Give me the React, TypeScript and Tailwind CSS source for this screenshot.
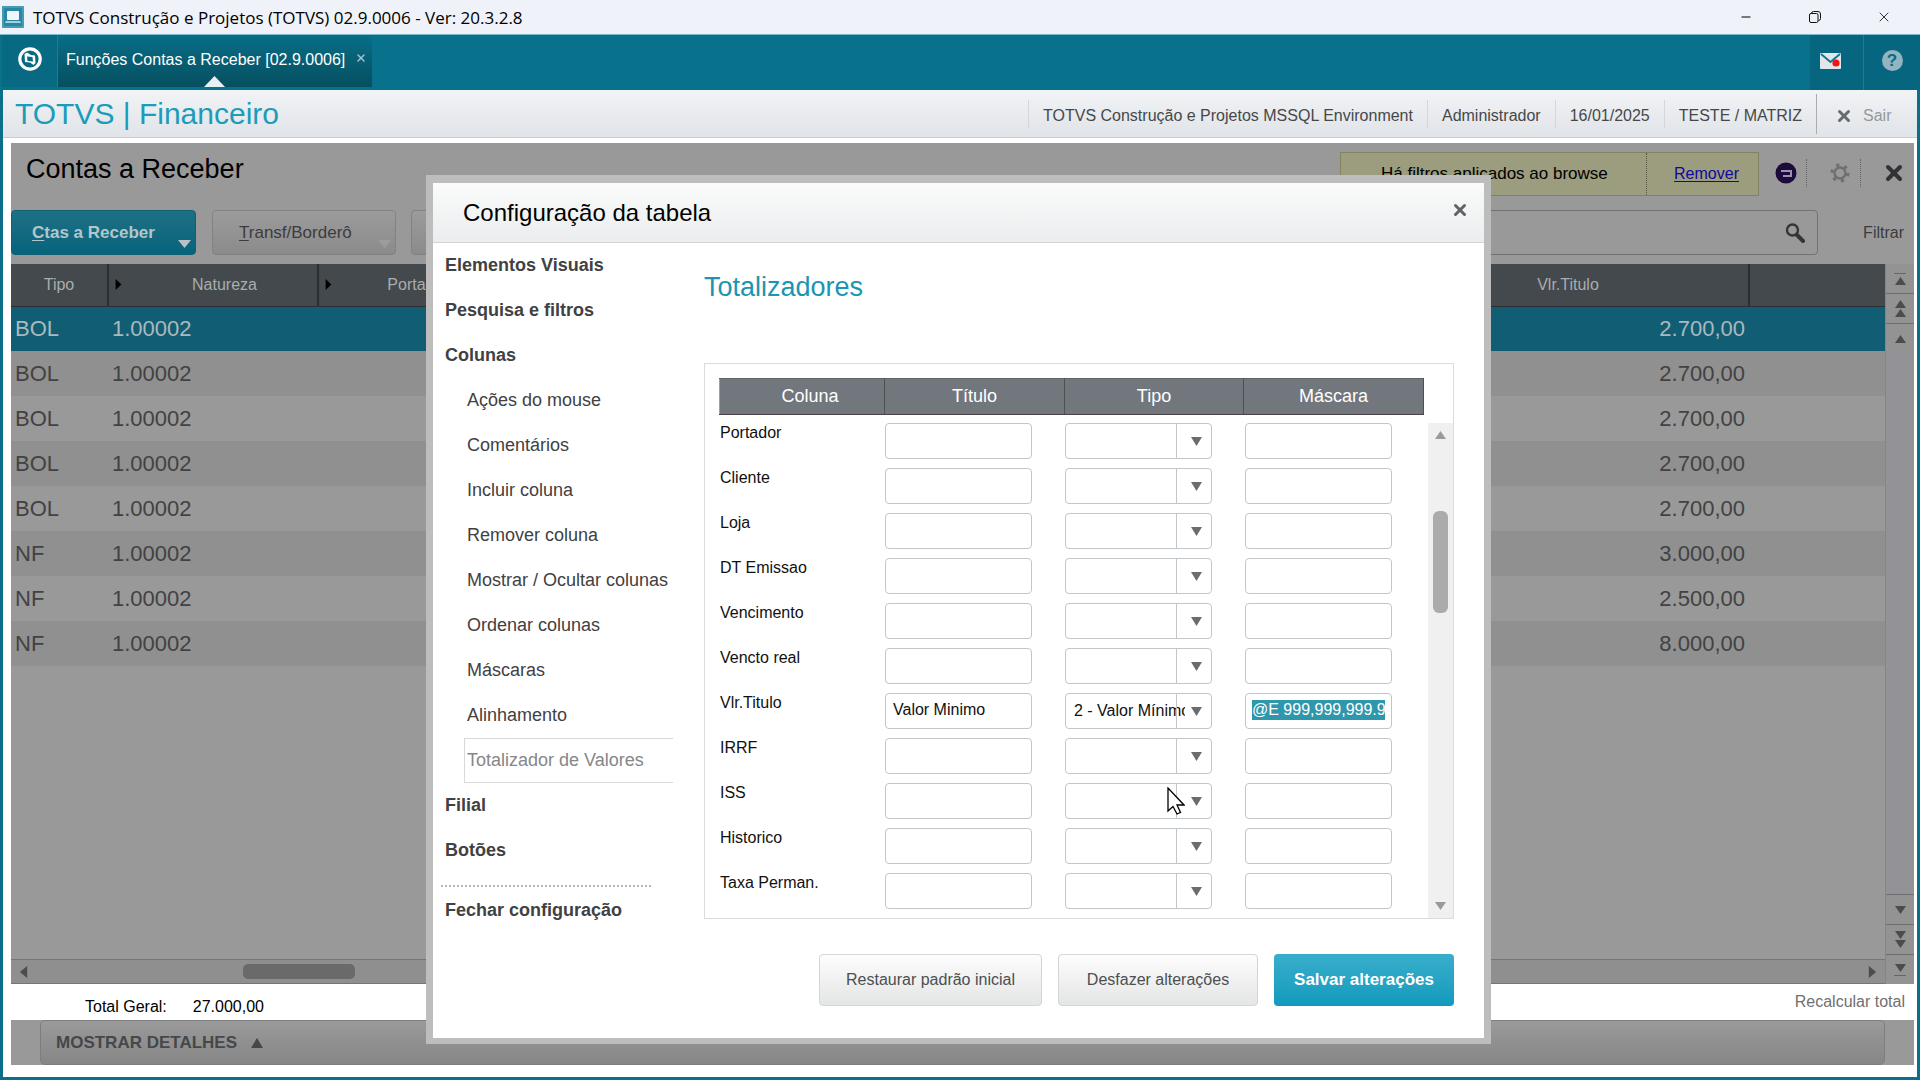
import { Minus, X } from "lucide-react"

const menu = [
  { label: "Elementos Visuais" },
  { label: "Pesquisa e filtros" },
  {
    label: "Colunas",
    items: [
      "Ações do mouse",
      "Comentários",
      "Incluir coluna",
      "Remover coluna",
      "Mostrar / Ocultar colunas",
      "Ordenar colunas",
      "Máscaras",
      "Alinhamento",
      "Totalizador de Valores",
    ],
  },
  { label: "Filial" },
  { label: "Botões" },
]

const totals = [
  { coluna: "Portador" },
  { coluna: "Cliente" },
  { coluna: "Loja" },
  { coluna: "DT Emissao" },
  { coluna: "Vencimento" },
  { coluna: "Vencto real" },
  { coluna: "Vlr.Titulo", titulo: "Valor Minimo", tipo: "2 - Valor Mínimo", mascara: "@E 999,999,999.99" },
  { coluna: "IRRF" },
  { coluna: "ISS" },
  { coluna: "Historico" },
  { coluna: "Taxa Perman." },
]

const records = [
  { tipo: "BOL", natureza: "1.00002", valor: "2.700,00" },
  { tipo: "BOL", natureza: "1.00002", valor: "2.700,00" },
  { tipo: "BOL", natureza: "1.00002", valor: "2.700,00" },
  { tipo: "BOL", natureza: "1.00002", valor: "2.700,00" },
  { tipo: "BOL", natureza: "1.00002", valor: "2.700,00" },
  { tipo: "NF", natureza: "1.00002", valor: "3.000,00" },
  { tipo: "NF", natureza: "1.00002", valor: "2.500,00" },
  { tipo: "NF", natureza: "1.00002", valor: "8.000,00" },
]

const arrows = {
  up: "M0 10 L6 0 L12 10 Z",
  down: "M0 0 L12 0 L6 10 Z",
  left: "M10 0 L10 12 L1 6 Z",
  right: "M1 0 L1 12 L10 6 Z",
}

function Arrow({ dir, className }: { dir: keyof typeof arrows; className: string }) {
  return (
    <svg viewBox={dir === "left" || dir === "right" ? "0 0 11 12" : "0 0 12 10"} preserveAspectRatio="none" className={className} fill="currentColor" aria-hidden="true">
      <path d={arrows[dir]} />
    </svg>
  )
}

function TitleBar() {
  return (
    <header className="flex h-[35px] items-center border-b border-[#7fb9c9] bg-[#eff2f8]">
      <svg viewBox="0 0 22 22" className="ml-[2px] h-[22px] w-[22px]" aria-hidden="true">
        <rect width="22" height="22" rx="1" fill="#2a86a3" />
        <rect x="1" y="1" width="20" height="20" fill="none" stroke="#5fb0c6" />
        <rect x="5" y="5" width="12" height="9" rx="1" fill="#eef8fb" />
        <path d="M4 15h14l1 2H3z" fill="#9fd3e0" />
      </svg>
      <h1 className="ml-[9px] pt-[2px] font-['Open_Sans',sans-serif] text-[17px] text-black">
        TOTVS Construção e Projetos (TOTVS) 02.9.0006 - Ver: 20.3.2.8
      </h1>
      <div className="ml-auto flex h-full items-center pr-[2px]">
        <button aria-label="Minimizar" className="flex h-full w-[69px] items-center justify-center">
          <Minus className="h-3.5 w-3.5 text-black" strokeWidth={2} />
        </button>
        <button aria-label="Restaurar" className="flex h-full w-[69px] items-center justify-center">
          <svg viewBox="0 0 12 12" className="h-3 w-3" fill="none" stroke="#111" aria-hidden="true">
            <rect x="0.5" y="2.5" width="8.5" height="9" rx="1.5" />
            <path d="M2.5 2.5 Q2.5 0.5 4.5 0.5 H9 Q11.5 0.5 11.5 3 V7.5 Q11.5 9.5 9.5 9.5" />
          </svg>
        </button>
        <button aria-label="Fechar janela" className="flex h-full w-[69px] items-center justify-center">
          <X className="h-4 w-4 text-[#333]" strokeWidth={1.5} />
        </button>
      </div>
    </header>
  )
}

function TabBar() {
  return (
    <nav className="flex h-[55px] bg-[#08718c]">
      <button aria-label="Início" className="ml-[2px] flex h-[52px] w-[56px] items-center justify-center border-r border-[#3a6f85] bg-[#086a82] pb-1">
        <svg viewBox="0 0 24 24" className="h-6 w-6" aria-hidden="true">
          <circle cx="12" cy="12" r="10.2" fill="none" stroke="#fff" strokeWidth="3.2" />
          <path d="M6.5 7 L9 5.5 L13 8 L17 8.5 L17.5 16 L15.5 18 L12 15.5 L7 15 Z" fill="#fff" />
          <path d="M9 9.5 L14.5 10 L15 14.5 L9.5 14 Z" fill="#086a82" />
        </svg>
      </button>
      <div className="relative flex h-[52px] w-[314px] items-center bg-gradient-to-b from-[#086e87] to-[#064f60] pb-[2px] pl-2 text-[16px] text-white">
        <a href="#funcoes">Funções Contas a Receber [02.9.0006]</a>
        <button aria-label="Fechar aba" className="ml-2.5 pb-1 text-[#9fc3ce]">
          <X className="h-3 w-3" strokeWidth={3} />
        </button>
        <Arrow dir="up" className="absolute bottom-0 left-[146px] h-[11px] w-[21px] text-[#e8f1f4]" />
      </div>
      <div className="ml-auto flex h-[55px] bg-[#07667f]">
        <button aria-label="Mensagens" className="flex w-[54px] items-center justify-center border-r border-[#3a6f85] pb-1 pr-3">
          <svg viewBox="0 0 21 16" className="h-4 w-[21px]" aria-hidden="true">
            <rect width="21" height="16" rx="1" fill="#dfe7ea" />
            <path d="M1 1 L10.5 9 L20 1" fill="none" stroke="#1b7389" strokeWidth="2" />
            <circle cx="16" cy="10" r="3.6" fill="#f21313" />
          </svg>
        </button>
        <button aria-label="Ajuda" className="flex w-[56px] items-center justify-center pb-1">
          <span className="flex h-[21px] w-[21px] items-center justify-center rounded-full bg-[#93b4c1] text-[17px] font-bold leading-none text-[#086a82]">?</span>
        </button>
      </div>
    </nav>
  )
}

function Toolbar() {
  return (
    <div className="flex h-[48px] items-center border-b border-[#c9cdcf] bg-gradient-to-b from-[#f1f3f5] to-[#e1e4e8] text-[16px] text-[#45484b]">
      <h2 className="ml-3 text-[30px] text-[#1a9cba]">TOTVS | Financeiro</h2>
      <div className="ml-auto flex h-7 items-center divide-x divide-[#d3d7da] border-l border-[#d3d7da] whitespace-nowrap">
        <span className="px-[14px] pt-1">TOTVS Construção e Projetos MSSQL Environment</span>
        <span className="px-[14px] pt-1">Administrador</span>
        <span className="px-[14px] pt-1">16/01/2025</span>
        <span className="px-[14px] pt-1">TESTE / MATRIZ</span>
      </div>
      <button className="flex h-10 w-[101px] items-center gap-[10px] border-l border-[#a9adb0] pl-[18px] pt-1 text-[#94989b]">
        <X className="h-[18px] w-[18px] text-[#686c70]" strokeWidth={4} />
        Sair
      </button>
    </div>
  )
}

function BrowseHeader() {
  return (
    <>
      <div className="flex h-[67px] items-start">
        <h2 className="ml-[15px] mt-2 text-[27px] leading-[36px] text-black">Contas a Receber</h2>
        <div className="ml-auto mt-[9px] flex h-[44px] items-center border border-[#83835f] bg-[#9c9c7e] text-[16px] text-black">
          <span className="w-[305px] pl-10 text-[17px]">Há filtros aplicados ao browse</span>
          <span className="flex h-full w-[112px] items-center justify-center border-l border-dotted border-[#55553f] pl-2">
            <a href="#remover" className="text-[#1008a0] underline underline-offset-2">Remover</a>
          </span>
        </div>
        <div className="mt-4 flex h-7 items-center">
          <button aria-label="Assistente" className="flex h-full w-[48px] items-center border-r border-dotted border-[#666] pl-4">
            <svg viewBox="0 0 22 22" className="h-[22px] w-[22px]" aria-hidden="true">
              <circle cx="11" cy="11" r="10.5" fill="#1c0c3c" />
              <path d="M6 9h10v5H8" stroke="#a08fae" strokeWidth="2" fill="none" />
            </svg>
          </button>
          <button aria-label="Configurações" className="flex h-full w-[54px] items-center justify-center border-r border-dotted border-[#666] pl-3 text-[#6f6f6f]">
            <svg viewBox="0 0 20 20" className="h-5 w-5" fill="none" stroke="currentColor" aria-hidden="true">
              <circle cx="10" cy="10" r="5.5" strokeWidth="2.4" />
              <circle cx="10" cy="10" r="8" strokeWidth="3" strokeDasharray="3.2 5.18" />
            </svg>
          </button>
          <button aria-label="Fechar" className="flex h-full w-[53px] items-center justify-center pl-3 text-[#303235]">
            <X className="h-6 w-6" strokeWidth={4} />
          </button>
        </div>
      </div>
      <div className="flex h-[45px] items-center text-[17px]">
        <button className="relative flex h-full w-[185px] items-center rounded-[4px] border border-[#0d6172] bg-gradient-to-b from-[#1e7084] to-[#04647c] pl-5 font-bold text-[#b5c6ca]">
          <span><span className="underline underline-offset-2">C</span>tas a Receber</span>
          <Arrow dir="down" className="absolute bottom-[6px] right-1 h-[8px] w-[13px] text-[#b9c3c5]" />
        </button>
        <button className="relative ml-4 flex h-full w-[184px] items-center rounded-[4px] border border-[#828282] bg-gradient-to-b from-[#9b9b9b] to-[#8b8b8b] pl-[26px] text-[17px] text-[#3c3c3c]">
          <span><span className="underline underline-offset-2">T</span>ransf/Borderô</span>
          <Arrow dir="down" className="absolute bottom-[6px] right-1 h-[8px] w-[13px] text-[#9c9c9c]" />
        </button>
        <button aria-label="Mais ações" className="ml-[15px] h-full w-[184px] rounded-[4px] border border-[#828282] bg-gradient-to-b from-[#9b9b9b] to-[#8b8b8b]" />
        <div className="ml-4 flex h-full flex-1 items-center rounded-[4px] border border-[#727272]">
          <input aria-label="Pesquisar" className="h-full min-w-0 flex-1 bg-transparent px-3 outline-none" />
          <button aria-label="Buscar" className="mr-3 text-[#333537]">
            <svg viewBox="0 0 20 20" className="h-5 w-5" fill="none" stroke="currentColor" aria-hidden="true">
              <circle cx="7.5" cy="7" r="5.5" strokeWidth="2.4" />
              <path d="M12 12 L18 18" strokeWidth="4" strokeLinecap="round" />
            </svg>
          </button>
        </div>
        <button className="w-[96px] pr-[10px] text-right text-[16px] text-[#3c3c3c]">Filtrar</button>
      </div>
    </>
  )
}

function BrowseTable() {
  return (
    <table className="w-full table-fixed border-collapse">
      <colgroup>
        <col className="w-[97px]" />
        <col className="w-[210px]" />
        <col className="w-[177px]" />
        <col />
        <col className="w-[362px]" />
        <col className="w-[136px]" />
      </colgroup>
      <thead>
        <tr className="h-[42px] bg-[#43494c] text-[16px] text-[#a9adae]">
          <th className="border-r-2 border-b border-[#2b2f31] font-normal">Tipo</th>
          {["Natureza", "Portador"].map((name) => (
            <th key={name} className="border-r-2 border-b border-[#2b2f31] font-normal">
              <span className="flex items-center pl-1.5">
                <Arrow dir="right" className="h-[11px] w-[7px] text-black" />
                <span className="flex-1 pl-2.5">{name}</span>
              </span>
            </th>
          ))}
          <th className="border-r-2 border-b border-[#2b2f31]" />
          <th className="border-r-2 border-b border-[#2b2f31] font-normal">Vlr.Titulo</th>
          <th className="border-b border-[#2b2f31]" />
        </tr>
      </thead>
      <tbody>
        {records.map((record, index) => (
          <tr
            key={index}
            className={`h-[45px] text-[22px] leading-[30px] ${
              index === 0 ? "bg-[#115e74] text-[#a9b9bd]" : index % 2 ? "bg-[#909090] text-[#424242]" : "bg-[#999999] text-[#424242]"
            }`}
          >
            <td className="pl-1">{record.tipo}</td>
            <td className="pl-1">{record.natureza}</td>
            <td />
            <td />
            <td className="pr-1 text-right">{record.valor}</td>
            <td />
          </tr>
        ))}
      </tbody>
    </table>
  )
}

const railButton = "flex h-[30px] w-full flex-col items-center justify-center border-b border-[#6d6d6d] bg-[#939393] text-[#4a4c4e]"

function ScrollRail() {
  return (
    <div className="flex w-[29px] flex-col justify-between border-l border-[#858585] bg-[#939397]">
      <div>
        <button aria-label="Primeiro registro" className={railButton}>
          <span className="mb-[3px] h-px w-3 bg-[#666]" />
          <Arrow dir="up" className="h-2 w-[11px]" />
        </button>
        <button aria-label="Página anterior" className={railButton}>
          <Arrow dir="up" className="h-2 w-[11px]" />
          <Arrow dir="up" className="mt-px h-2 w-[11px]" />
        </button>
        <button aria-label="Registro anterior" className="flex h-[30px] w-full items-center justify-center bg-[#939393] text-[#4a4c4e]">
          <Arrow dir="up" className="h-2 w-[11px]" />
        </button>
      </div>
      <div className="border-t border-[#6d6d6d]">
        <button aria-label="Próximo registro" className={railButton}>
          <Arrow dir="down" className="h-2 w-[11px]" />
        </button>
        <button aria-label="Próxima página" className={railButton}>
          <Arrow dir="down" className="h-2 w-[11px]" />
          <Arrow dir="down" className="mt-px h-2 w-[11px]" />
        </button>
        <button aria-label="Último registro" className="flex h-[29px] w-full flex-col items-center justify-center bg-[#939393] text-[#4a4c4e]">
          <Arrow dir="down" className="h-2 w-[11px]" />
          <span className="mt-[3px] h-px w-3 bg-[#666]" />
        </button>
      </div>
    </div>
  )
}

function Browse() {
  return (
    <main className="mt-[5px] flex flex-1 flex-col pb-3 pl-2 pr-[3px]">
      <div className="flex flex-1 flex-col bg-[#999999]">
        <BrowseHeader />
        <div className="mt-[9px] flex flex-1">
          <div className="flex min-w-0 flex-1 flex-col">
            <div className="flex-1">
              <BrowseTable />
            </div>
            <div className="flex h-[25px] items-center border-y border-[#757575] bg-[#8f8f8f] px-2 text-[#4c4c4c]">
              <Arrow dir="left" className="h-3 w-[9px]" />
              <span className="ml-[215px] h-[15px] w-[112px] rounded-[5px] bg-[#6a6a6a]" />
              <Arrow dir="right" className="ml-auto h-3 w-[9px]" />
            </div>
          </div>
          <ScrollRail />
        </div>
      </div>
      <div className="flex h-[36px] items-center justify-between bg-white pl-[74px] pr-[9px] text-[16px]">
        <div className="flex gap-[26px] pt-2.5 text-black">
          <span>Total Geral:</span>
          <span>27.000,00</span>
        </div>
        <button className="text-[#707070]">Recalcular total</button>
      </div>
      <div className="bg-[#999999] pl-[29px] pr-[29px]">
        <button className="flex h-[45px] w-full items-center gap-[14px] rounded-[5px] border border-[#7d7d7d] bg-gradient-to-b from-[#9a9a9a] to-[#868686] pl-[15px] text-[17px] font-bold text-[#45474a]">
          MOSTRAR DETALHES
          <Arrow dir="up" className="h-[10px] w-3" />
        </button>
      </div>
    </main>
  )
}

function ConfigMenu() {
  return (
    <nav className="w-[271px] shrink-0 pl-3 text-[18px] text-[#3f4142]">
      <ul>
        {menu.map((group) => (
          <li key={group.label}>
            <a href="#grupo" className="flex h-[45px] items-center font-bold">{group.label}</a>
            {group.items && (
              <ul className="pl-[19px] pr-[20px]">
                {group.items.map((item) => (
                  <li key={item}>
                    <a
                      href="#item"
                      className={`flex h-[45px] w-[209px] items-center whitespace-nowrap border-y border-l pl-[2px] ${
                        item === "Totalizador de Valores" ? "border-[#d9d9d9] text-[#85878a]" : "border-transparent"
                      }`}
                    >
                      {item}
                    </a>
                  </li>
                ))}
              </ul>
            )}
          </li>
        ))}
      </ul>
      <hr className="-ml-1 mt-[12px] w-[210px] border-t-2 border-dotted border-[#b5b5b5]" />
      <a href="#fechar" className="flex h-[47px] items-center font-bold">Fechar configuração</a>
    </nav>
  )
}

const field = "block h-9 w-[147px] rounded-[4px] border border-[#c3c6c8] text-[16px] outline-none"

function TotalsPanel() {
  return (
    <section className="border border-[#dcdcdc] pl-[14px] pt-[14px]">
      <table className="table-fixed border-collapse">
        <colgroup>
          <col className="w-[165px]" />
          <col className="w-[180px]" />
          <col className="w-[179px]" />
          <col className="w-[180px]" />
        </colgroup>
        <thead>
          <tr className="h-[36px] bg-[#72777d] text-[18px] text-white">
            {["Coluna", "Título", "Tipo", "Máscara"].map((name) => (
              <th key={name} className="border-x border-y border-l-[#9ea2a6] border-r-[#4d5054] border-b-[#4a4348] border-t-[#5f6469] font-normal first:pl-4">
                {name}
              </th>
            ))}
          </tr>
        </thead>
      </table>
      <div className="mt-2 flex">
        <table className="table-fixed border-collapse">
          <colgroup>
            <col className="w-[166px]" />
            <col className="w-[180px]" />
            <col className="w-[180px]" />
            <col className="w-[180px]" />
          </colgroup>
          <tbody>
            {totals.map((row) => (
              <tr key={row.coluna} className="h-[45px] align-top">
                <th scope="row" className="pl-px text-left text-[16px] font-normal leading-5 text-[#111]">{row.coluna}</th>
                <td>
                  <input aria-label={`Título ${row.coluna}`} defaultValue={row.titulo} className={`${field} bg-white px-[7px] pb-[2px] text-[#111]`} />
                </td>
                <td>
                  <div className="relative w-[147px]">
                    <select aria-label={`Tipo ${row.coluna}`} defaultValue={row.tipo} className={`${field} appearance-none bg-white pl-2 pr-[26px] text-[#111]`}>
                      <option>{row.tipo}</option>
                    </select>
                    <span className="pointer-events-none absolute inset-y-px right-0 flex w-[36px] items-center justify-center border-l border-[#c3c6c8] pl-1 text-[#6a6d70]">
                      <Arrow dir="down" className="h-[9px] w-[11px]" />
                    </span>
                  </div>
                </td>
                <td>
                  <input
                    aria-label={`Máscara ${row.coluna}`}
                    defaultValue={row.mascara}
                    className={`${field} px-[6px] pb-2 pt-[6px] ${row.mascara ? "bg-[#2f97ab] bg-clip-content text-white" : "bg-white"}`}
                  />
                </td>
              </tr>
            ))}
          </tbody>
        </table>
        <div className="ml-[3px] flex flex-1 flex-col items-center bg-[#f0f0f0] text-[#9a9a9a]">
          <Arrow dir="up" className="mt-2 h-2 w-[11px]" />
          <span className="mt-[72px] h-[102px] w-[15px] rounded-[6px] bg-[#ababab]" />
          <Arrow dir="down" className="mb-2 mt-auto h-2 w-[11px]" />
        </div>
      </div>
    </section>
  )
}

function ConfigDialog() {
  return (
    <div role="dialog" aria-label="Configuração da tabela" className="w-[1065px] self-start border-x-[7px] border-b-[6px] border-t-8 border-[#bdbdbd] bg-white">
      <header className="flex h-[60px] items-center justify-between border-b border-[#d2d4d5] bg-gradient-to-b from-[#fafbfb] to-[#ebedee] pl-[30px] pr-[15px]">
        <h2 className="text-[24px] leading-[30px] text-black">Configuração da tabela</h2>
        <button aria-label="Fechar diálogo" className="mb-[6px] text-[#606366]">
          <X className="h-[18px] w-[18px]" strokeWidth={4} />
        </button>
      </header>
      <div className="flex">
        <ConfigMenu />
        <div className="flex-1 pb-8 pr-[30px]">
          <h3 className="flex h-[120px] items-start pt-[26px] text-[27px] leading-[36px] text-[#1a96b3]">Totalizadores</h3>
          <TotalsPanel />
          <div className="mt-[35px] flex justify-end gap-4 text-[16px] text-[#4b4f52]">
            <button className="h-[52px] w-[223px] rounded-[4px] border border-[#d3d5d6] bg-gradient-to-b from-[#fdfdfd] to-[#e4e5e6]">
              Restaurar padrão inicial
            </button>
            <button className="h-[52px] w-[200px] rounded-[4px] border border-[#d3d5d6] bg-gradient-to-b from-[#fdfdfd] to-[#e4e5e6]">
              Desfazer alterações
            </button>
            <button className="h-[52px] w-[180px] rounded-[4px] bg-gradient-to-b from-[#38aecb] to-[#0f9abd] text-[17px] font-bold text-white">
              Salvar alterações
            </button>
          </div>
        </div>
      </div>
    </div>
  )
}

export default function App() {
  return (
    <div className="relative flex min-h-screen flex-col bg-white font-['Liberation_Sans',Arial,sans-serif]">
      <TitleBar />
      <TabBar />
      <div className="flex flex-1 flex-col border-x-[3px] border-b-[3px] border-[#0c6e88]">
        <Toolbar />
        <Browse />
      </div>
      <div className="absolute inset-0 flex justify-center pr-[3px] pt-[175px]">
        <ConfigDialog />
      </div>
      {/* mouse pointer */}
      <svg viewBox="0 0 18 28" className="absolute left-[1167px] top-[787px] h-7 w-[18px]" fill="#fff" stroke="#000" strokeWidth="1.3" aria-hidden="true">
        <path d="M1 1 L1 24 L6 19.5 L10 27 L13.5 25.5 L10 18 L17 18 Z" />
      </svg>
    </div>
  )
}
